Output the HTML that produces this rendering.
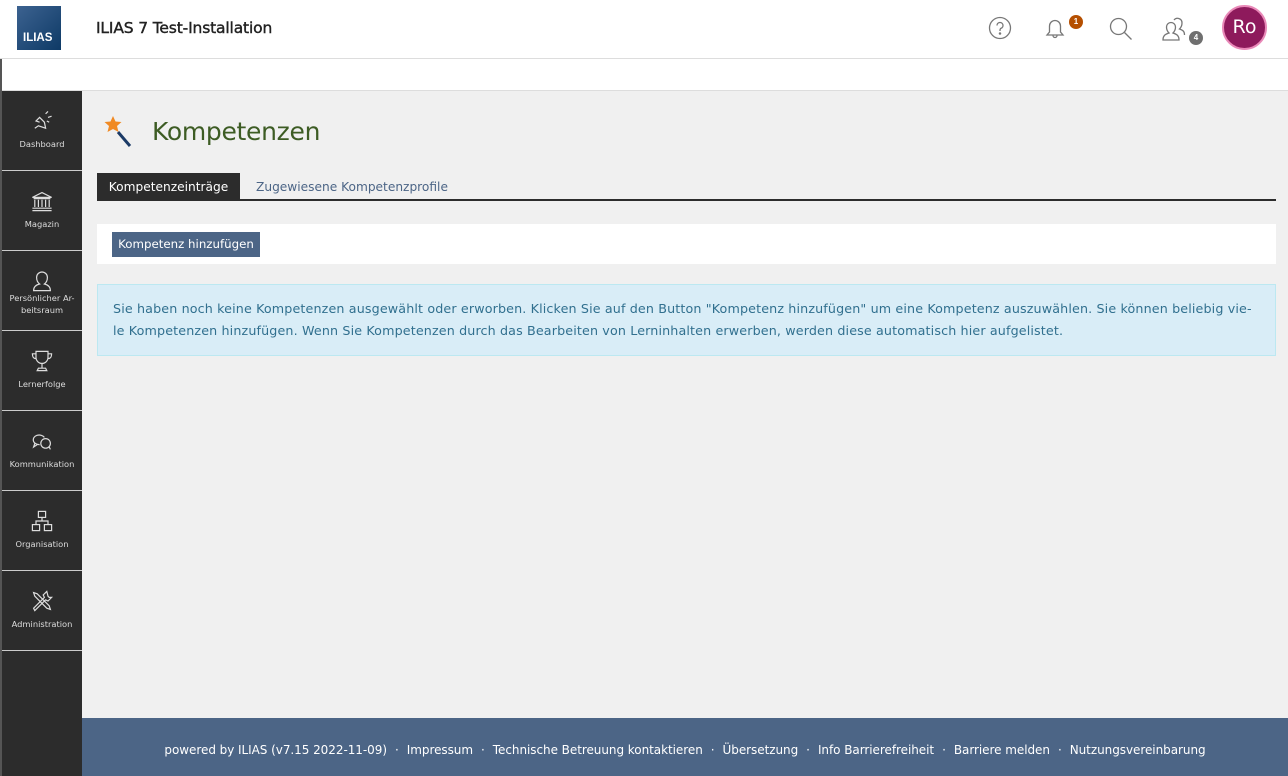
<!DOCTYPE html><html><head><meta charset="utf-8"><style>
*{box-sizing:border-box;margin:0;padding:0}
body{width:1288px;height:776px;overflow:hidden;background:#f0f0f0;font-family:"DejaVu Sans","Liberation Sans",sans-serif;position:relative}
.hdr{position:absolute;left:0;top:0;width:1288px;height:59px;background:#fff;border-bottom:1px solid #ddd}
.sub{position:absolute;left:0;top:59px;width:1288px;height:32px;background:#fff;border-bottom:1px solid #ddd}
.logo{position:absolute;left:17px;top:6px;width:44px;height:44px;background:linear-gradient(135deg,#3c6290,#0e3a66);color:#fff;font:bold 11.5px "Liberation Sans",sans-serif;padding:26px 0 0 6px}
.title{position:absolute;left:96px;top:19px;font-size:15.5px;color:#222;white-space:nowrap;letter-spacing:-.15px;-webkit-text-stroke:.4px #222}
.side{position:absolute;left:2px;top:91px;width:80px;height:685px;background:#2c2c2c}
.lstrip{position:absolute;left:0;top:59px;width:2px;height:717px;background:#555}
.it{height:80px;border-bottom:1px solid #ccc;color:#ddd;font-size:8.3px;text-align:center;position:relative}
.it svg{position:absolute;left:28px;top:18px}
.it span{position:absolute;left:0;right:0;line-height:12px}
.foot{position:absolute;left:82px;top:718px;width:1206px;height:58px;background:#4c6586;color:#fff;font-size:12px;padding-top:25px;text-align:center;white-space:nowrap;letter-spacing:-.05px}
.foot b{font-weight:normal;margin:0 8px}
</style></head><body>
<div class="hdr">
<div class="logo">ILIAS</div>
<div class="title">ILIAS 7 Test-Installation</div>
<svg style="position:absolute;left:988px;top:16px" width="24" height="24" viewBox="0 0 24 24" fill="none" stroke="#777" stroke-width="1.3"><circle cx="12" cy="12" r="10.5"/><path d="M9 9.5a3 3 0 1 1 4 2.8c-.8.4-1 1-1 2v.7"/><circle cx="12" cy="17.5" r=".6" fill="#777"/></svg>
<svg style="position:absolute;left:1043px;top:16px" width="24" height="26" viewBox="0 0 24 26" fill="none" stroke="#777" stroke-width="1.3"><path d="M4 19h16l-2.5-3V10a5.5 5.5 0 0 0-11 0v6z"/><path d="M10 19.5a2 2 0 0 0 4 0"/></svg>
<div style="position:absolute;left:1069px;top:15px;width:14px;height:14px;border-radius:7px;background:#b54f00;color:#fff;font:bold 8px sans-serif;text-align:center;line-height:14px">1</div>
<svg style="position:absolute;left:1108px;top:16px" width="26" height="26" viewBox="0 0 26 26" fill="none" stroke="#777" stroke-width="1.3"><circle cx="10.5" cy="10.5" r="8"/><path d="M16.5 16.5l7 7"/></svg>
<svg style="position:absolute;left:1161px;top:15px" width="30" height="28" viewBox="0 0 30 28" fill="none" stroke="#777" stroke-width="1.3"><path d="M2 25c0-5 3-6 6-7-2-2-2.5-4-2.5-6a4.5 4.5 0 0 1 9 0c0 2-.5 4-2.5 6 3 1 6 2 6 7z"/><path d="M13 5a4.5 4.5 0 0 1 8 3c0 2-.5 4-2.5 6 3 1 5 2 5 6"/></svg>
<div style="position:absolute;left:1189px;top:31px;width:14px;height:14px;border-radius:7px;background:#6f6f6f;color:#fff;font:bold 8px sans-serif;text-align:center;line-height:14px">4</div>
<div style="position:absolute;left:1222px;top:5px;width:45px;height:45px;border-radius:50%;background:#8e1a5c;border:2px solid #e989b8;color:#fff;font-size:19px;text-align:center;line-height:40px">Ro</div>
</div>
<div class="sub"></div>
<div class="lstrip"></div>
<div class="side">
<div class="it"><svg width="24" height="24" viewBox="0 0 20 20" fill="none" stroke="#ddd" stroke-width="1"><path d="M4 16l3-2 6 2-1-5-4-4-3 3 3 1"/><path d="M13 4l2-2M15 7l3-1M14 10l2 1"/></svg><span style="top:47px">Dashboard</span></div>
<div class="it"><svg width="24" height="24" viewBox="0 0 20 20" fill="none" stroke="#ddd" stroke-width="1"><path d="M2 7l8-4 8 4zM3 8h14M4 9v6M7 9v6M10 9v6M13 9v6M16 9v6M2 16h16M2 18h16"/></svg><span style="top:47px">Magazin</span></div>
<div class="it"><svg width="24" height="24" viewBox="0 0 20 20" fill="none" stroke="#ddd" stroke-width="1"><path d="M3 18c0-4 3-5 5-5.5-2-1.5-2.5-3.5-2.5-5.5a4.5 4.5 0 0 1 9 0c0 2-.5 4-2.5 5.5 2 .5 5 1.5 5 5.5z"/></svg><span style="top:41px">Persönlicher Ar-<br>beitsraum</span></div>
<div class="it"><svg width="24" height="24" viewBox="0 0 20 20" fill="none" stroke="#ddd" stroke-width="1"><path d="M5 2h10v5a5 5 0 0 1-10 0zM5 4H2c0 3 1 4 3 4M15 4h3c0 3-1 4-3 4M10 12v4M6 18h8l-1-2H7z"/></svg><span style="top:47px">Lernerfolge</span></div>
<div class="it"><svg width="24" height="24" viewBox="0 0 20 20" fill="none" stroke="#ddd" stroke-width="1"><path d="M8 13A5 4 0 1 1 12 7M4 12l-1 3 3-2"/><circle cx="13" cy="12" r="4"/><path d="M16 15l1 2"/></svg><span style="top:47px">Kommunikation</span></div>
<div class="it"><svg width="24" height="24" viewBox="0 0 20 20" fill="none" stroke="#ddd" stroke-width="1"><rect x="7" y="2" width="6" height="5"/><rect x="2" y="13" width="6" height="5"/><rect x="12" y="13" width="6" height="5"/><path d="M10 7v3M5 13v-3h10v3"/></svg><span style="top:47px">Organisation</span></div>
<div class="it"><svg width="24" height="24" viewBox="0 0 20 20" fill="none" stroke="#ddd" stroke-width="1"><path d="M3 3l3 1 10 10 1 3-3-1L4 6zM14 2l-3 3 1 2-9 9 1 2 9-9 2 1 3-3-2 0-1-1z"/></svg><span style="top:47px">Administration</span></div>
</div>
<svg style="position:absolute;left:104px;top:114px" width="30" height="34" viewBox="0 0 30 34"><path d="M14 18l12 14" stroke="#1b3a66" stroke-width="3"/><path d="M9 2l2.5 5.5 6 .5-4.5 4 1.5 6-5.5-3-5.5 3 1.5-6L0.5 8l6-.5z" fill="#f08a24"/></svg>
<div style="position:absolute;left:152px;top:117px;font-size:25px;color:#3d5c24;letter-spacing:-.3px">Kompetenzen</div>
<div style="position:absolute;left:97px;top:173px;width:143px;height:27px;background:#2c2c2c;color:#fff;font-size:12.2px;line-height:28px;text-align:center">Kompetenzeinträge</div>
<div style="position:absolute;left:256px;top:173px;height:27px;color:#4c6586;font-size:12.2px;line-height:29px">Zugewiesene Kompetenzprofile</div>
<div style="position:absolute;left:97px;top:199px;width:1179px;height:2px;background:#2c2c2c"></div>
<div style="position:absolute;left:97px;top:224px;width:1179px;height:40px;background:#fff"></div>
<div style="position:absolute;left:112px;top:232px;width:148px;height:25px;background:#4c6586;color:#fff;font-size:11.8px;line-height:24px;text-align:center">Kompetenz hinzufügen</div>
<div style="position:absolute;left:97px;top:284px;width:1179px;height:72px;background:#d9edf7;border:1px solid #bce8f1;color:#31708f;font-size:12.7px;line-height:22px;padding:13px 0 0 15px;white-space:nowrap;letter-spacing:.14px">Sie haben noch keine Kompetenzen ausgewählt oder erworben. Klicken Sie auf den Button "Kompetenz hinzufügen" um eine Kompetenz auszuwählen. Sie können beliebig vie-<br>le Kompetenzen hinzufügen. Wenn Sie Kompetenzen durch das Bearbeiten von Lerninhalten erwerben, werden diese automatisch hier aufgelistet.</div>
<div class="foot">powered by ILIAS (v7.15 2022-11-09)<b>·</b>Impressum<b>·</b>Technische Betreuung kontaktieren<b>·</b>Übersetzung<b>·</b>Info Barrierefreiheit<b>·</b>Barriere melden<b>·</b>Nutzungsvereinbarung</div>
</body></html>
